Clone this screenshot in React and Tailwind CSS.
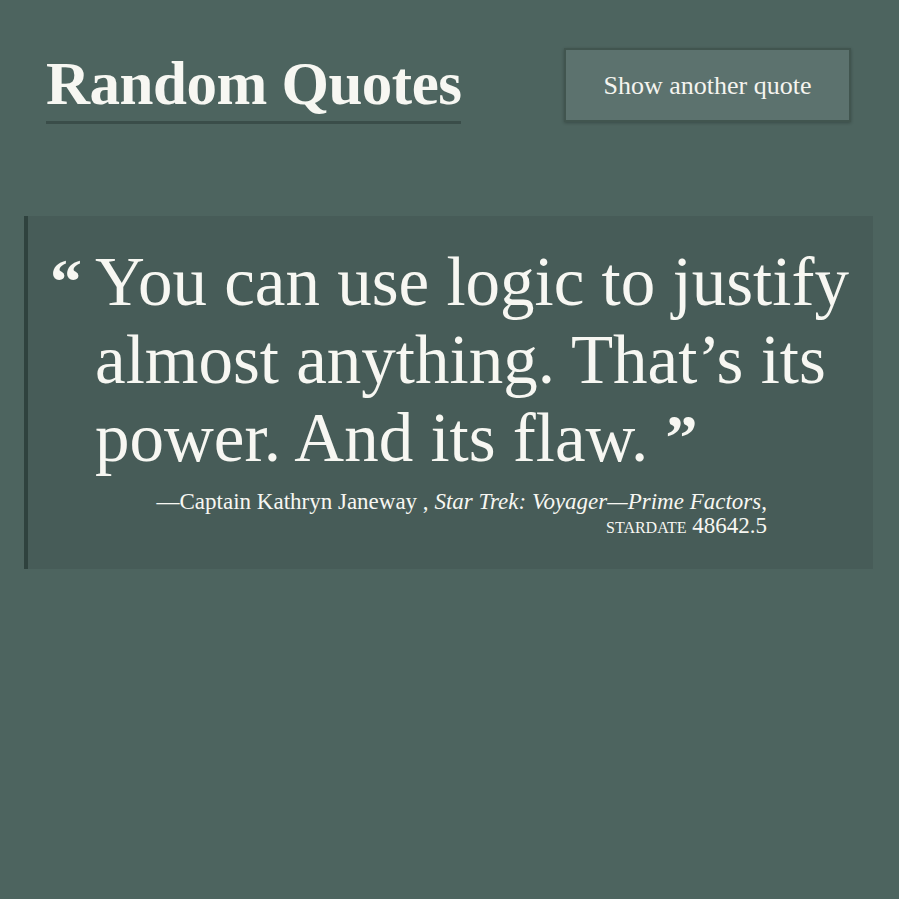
export default function App() {
  return (
    <div className="min-h-[899px] w-full bg-[#4d645f] text-[#f7f7f2]" style={{ fontFamily: '"Liberation Serif", "DejaVu Serif", serif' }}>
      <header className="flex items-start justify-between pl-[46px] pr-[48px] pt-[48px]">
        <h1 className="border-b-[3px] border-[#3a4d49] pb-[1px] text-[61px] font-bold leading-[72px] tracking-[-0.5px]">
          Random Quotes
        </h1>
        <button className="h-[74px] w-[287px] border-2 border-[#41554f] bg-[#5c726e] text-[26px] text-[#f4f4ef] shadow-[0_1px_3px_rgba(0,0,0,0.25)]">
          Show another quote
        </button>
      </header>
      <main className="pl-[24px] pr-[26px] pt-[92px]">
        <blockquote className="border-l-4 border-[#2f423e] bg-[#475c58] pb-[29px] pl-[22px] pr-[20px] pt-[27px]">
          <p className="flex text-[69px] leading-[78px]">
            <span className="w-[45px] shrink-0 text-[64px] font-bold leading-[78px]">“</span>
            <span>
              You can use logic to justify<br />
              almost anything. That’s its<br />
              power. And its flaw. <span className="align-top text-[64px] font-bold">”</span>
            </span>
          </p>
          <footer className="mt-[13px] pr-[86px] text-right text-[23px] leading-[24px]">
            <span>—Captain Kathryn Janeway , </span>
            <cite className="italic">Star Trek: Voyager—Prime Factors</cite>,
            <br />
            <span className="text-[16px] uppercase">Stardate</span> <span>48642.5</span>
          </footer>
        </blockquote>
      </main>
    </div>
  );
}
